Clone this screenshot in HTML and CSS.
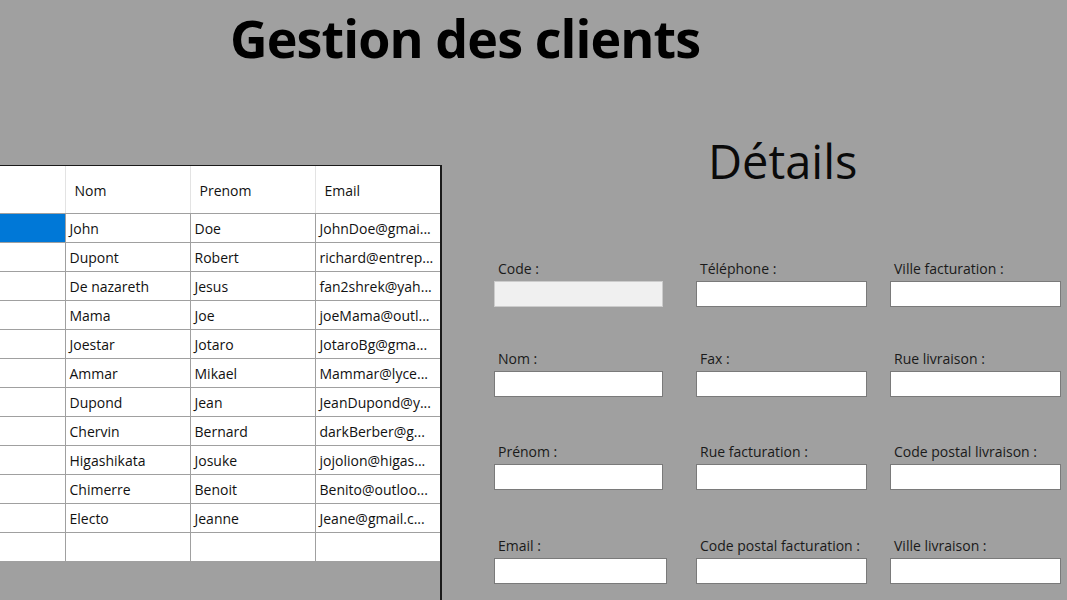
FILE: index.html
```html
<!DOCTYPE html>
<html lang="fr">
<head>
<meta charset="utf-8">
<title>Gestion des clients</title>
<link rel="stylesheet" href="styles.css">
</head>
<body>
<header class="title-bar">
  <h1 class="title">Gestion des clients</h1>
</header>
<main class="content">
  <section class="grid-panel">
    <table class="grid">
      <colgroup>
        <col class="col-0"><col class="col-n"><col class="col-n"><col class="col-n">
      </colgroup>
      <thead>
        <tr><th class="c0"></th><th>Nom</th><th>Prenom</th><th>Email</th></tr>
      </thead>
      <tbody>
        <tr><td class="c0 selected"></td><td>John</td><td>Doe</td><td>JohnDoe@gmai...</td></tr>
        <tr><td class="c0"></td><td>Dupont</td><td>Robert</td><td>richard@entrep...</td></tr>
        <tr><td class="c0"></td><td>De nazareth</td><td>Jesus</td><td>fan2shrek@yah...</td></tr>
        <tr><td class="c0"></td><td>Mama</td><td>Joe</td><td>joeMama@outl...</td></tr>
        <tr><td class="c0"></td><td>Joestar</td><td>Jotaro</td><td>JotaroBg@gma...</td></tr>
        <tr><td class="c0"></td><td>Ammar</td><td>Mikael</td><td>Mammar@lyce...</td></tr>
        <tr><td class="c0"></td><td>Dupond</td><td>Jean</td><td>JeanDupond@y...</td></tr>
        <tr><td class="c0"></td><td>Chervin</td><td>Bernard</td><td>darkBerber@g...</td></tr>
        <tr><td class="c0"></td><td>Higashikata</td><td>Josuke</td><td>jojolion@higas...</td></tr>
        <tr><td class="c0"></td><td>Chimerre</td><td>Benoit</td><td>Benito@outloo...</td></tr>
        <tr><td class="c0"></td><td>Electo</td><td>Jeanne</td><td>Jeane@gmail.c...</td></tr>
        <tr><td class="c0"></td><td></td><td></td><td></td></tr>
      </tbody>
    </table>
  </section>
  <section class="details">
    <h2 class="details-title">Détails</h2>
    <div class="form">
      <div class="field"><label>Code :</label><div class="box disabled"></div></div>
      <div class="field"><label>Téléphone :</label><div class="box"></div></div>
      <div class="field"><label>Ville facturation :</label><div class="box"></div></div>
      <div class="field"><label>Nom :</label><div class="box narrow"></div></div>
      <div class="field"><label>Fax :</label><div class="box"></div></div>
      <div class="field"><label>Rue livraison :</label><div class="box"></div></div>
      <div class="field"><label>Prénom :</label><div class="box narrow"></div></div>
      <div class="field"><label>Rue facturation :</label><div class="box"></div></div>
      <div class="field"><label>Code postal livraison :</label><div class="box"></div></div>
      <div class="field"><label>Email :</label><div class="box wide"></div></div>
      <div class="field"><label>Code postal facturation :</label><div class="box"></div></div>
      <div class="field"><label>Ville livraison :</label><div class="box"></div></div>
    </div>
  </section>
</main>
</body>
</html>
```
FILE: styles.css
```css
html, body {
  margin: 0;
  padding: 0;
  height: 100%;
  overflow: hidden;
}
body {
  background: #a0a0a0;
  font-family: "Open Sans", "Noto Sans", sans-serif;
  color: #111;
}
.title-bar {
  height: 120px;
  padding-left: 230px;
  box-sizing: border-box;
}
.title {
  margin: 0;
  padding-top: 3px;
  font-size: 52px;
  font-weight: 700;
  line-height: 70px;
  color: #000;
  letter-spacing: -0.9px;
}
.content {
  display: flex;
  height: 480px;
}
.grid-panel {
  width: 440px;
  margin-top: 45px;
  border-top: 1px solid #1a1a1a;
  border-right: 2px solid #1a1a1a;
  flex: none;
}
.grid {
  border-collapse: collapse;
  table-layout: fixed;
  width: 440px;
  background: #fff;
  font-size: 14px;
}
.col-0 { width: 65px; }
.col-n { width: 125px; }
.grid th, .grid td {
  padding: 0;
  text-align: left;
  font-weight: 400;
  white-space: nowrap;
  overflow: hidden;
  color: #111;
}
.grid th {
  height: 46px;
  padding-left: 9px;
  padding-top: 1px;
  border-left: 1px solid #e3e3e3;
  border-bottom: 1px solid #a0a0a0;
}
.grid td {
  height: 28px;
  padding-left: 4px;
  border-left: 1px solid #a0a0a0;
  border-bottom: 1px solid #a0a0a0;
}
.grid th.c0, .grid td.c0 { border-left: none; }
.grid tr:last-child td { border-bottom: none; }
.grid td.selected { background: #0078d7; }
.details {
  flex: 1;
  padding-left: 52px;
}
.details-title {
  margin: 0;
  padding-left: 214px;
  padding-top: 10px;
  font-size: 47px;
  font-weight: 400;
  line-height: 62px;
  height: 129px;
  color: #0a0a0a;
}
.form {
  display: grid;
  grid-template-columns: 202px 194px 172px;
  grid-template-rows: 90px 93px 94px auto;
}
.field label {
  display: block;
  font-size: 14px;
  line-height: 19px;
  padding-left: 4px;
  padding-bottom: 3px;
  color: #1a1a1a;
}
.box {
  width: 171px;
  height: 26px;
  box-sizing: border-box;
  background: #fff;
  border: 1px solid #7a7a7a;
}
.box.narrow { width: 169px; }
.box.disabled {
  width: 169px;
  background: #f0f0f0;
  border-color: #cccccc;
}
.box.wide { width: 173px; }
```
